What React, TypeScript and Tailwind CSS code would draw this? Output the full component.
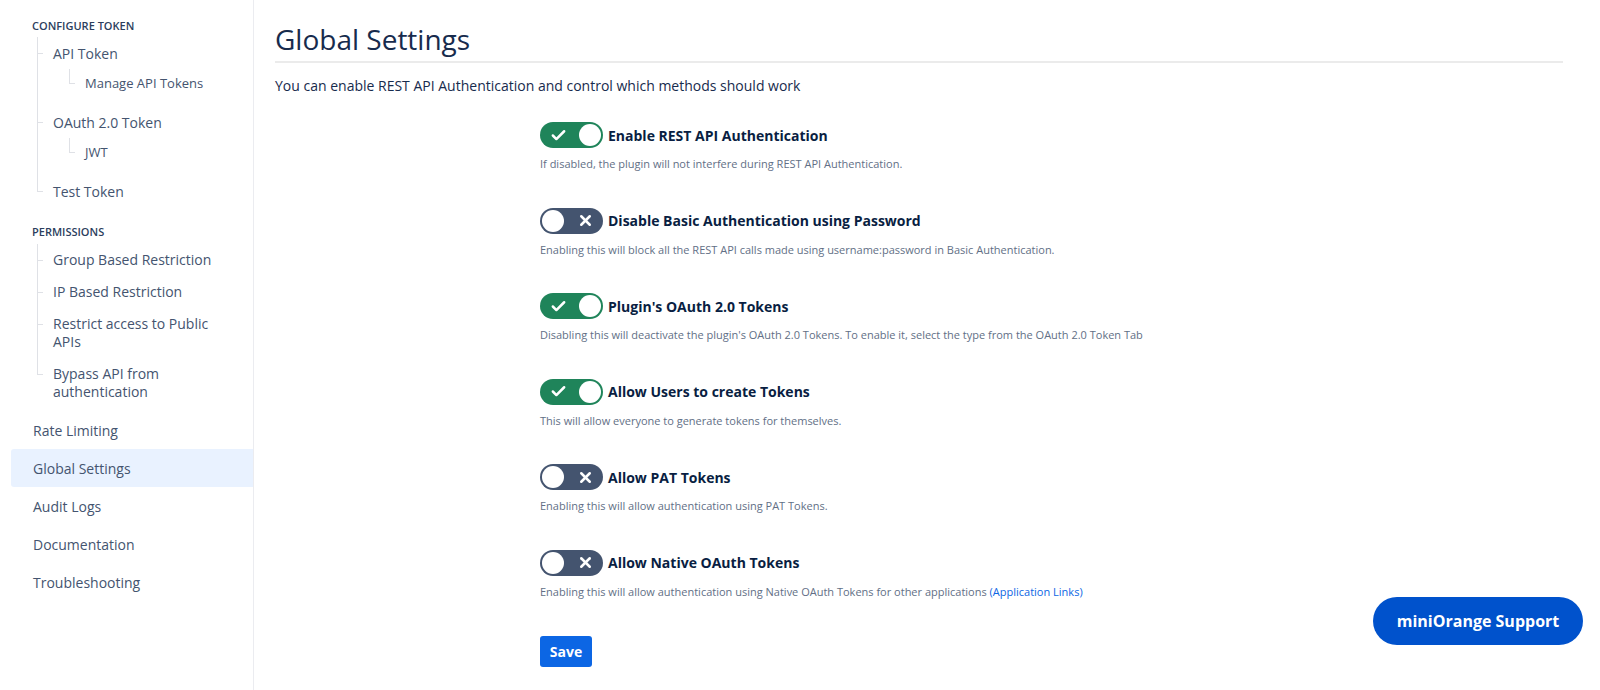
import { Check, X } from "lucide-react";

const font = { fontFamily: '"Open Sans", "Noto Sans", sans-serif' };

interface TreeItem {
  label: string;
  children?: string[];
}

const configureItems: TreeItem[] = [
  { label: "API Token", children: ["Manage API Tokens"] },
  { label: "OAuth 2.0 Token", children: ["JWT"] },
  { label: "Test Token" },
];

const permissionItems = [
  "Group Based Restriction",
  "IP Based Restriction",
  "Restrict access to Public APIs",
  "Bypass API from authentication",
];

const bottomItems = [
  "Rate Limiting",
  "Global Settings",
  "Audit Logs",
  "Documentation",
  "Troubleshooting",
];

interface Setting {
  title: string;
  description: string;
  enabled: boolean;
  link?: string;
}

const settings: Setting[] = [
  {
    title: "Enable REST API Authentication",
    description:
      "If disabled, the plugin will not interfere during REST API Authentication.",
    enabled: true,
  },
  {
    title: "Disable Basic Authentication using Password",
    description:
      "Enabling this will block all the REST API calls made using username:password in Basic Authentication.",
    enabled: false,
  },
  {
    title: "Plugin's OAuth 2.0 Tokens",
    description:
      "Disabling this will deactivate the plugin's OAuth 2.0 Tokens. To enable it, select the type from the OAuth 2.0 Token Tab",
    enabled: true,
  },
  {
    title: "Allow Users to create Tokens",
    description: "This will allow everyone to generate tokens for themselves.",
    enabled: true,
  },
  {
    title: "Allow PAT Tokens",
    description: "Enabling this will allow authentication using PAT Tokens.",
    enabled: false,
  },
  {
    title: "Allow Native OAuth Tokens",
    description:
      "Enabling this will allow authentication using Native OAuth Tokens for other applications",
    enabled: false,
    link: "(Application Links)",
  },
];

function Heading({ children }: { children: string }) {
  return (
    <div className="h-[16px] pl-[21px] text-[11px] font-semibold leading-[16px] text-[#2c3e5d]">
      {children}
    </div>
  );
}

function ConfigureTree() {
  return (
    <div className="relative mt-[3px] pl-[42px]">
      <span className="absolute top-0 bottom-[16px] left-[26px] w-px bg-[#dfe1e6]" />
      {configureItems.map((item, i) => (
        <div key={item.label} className={i < configureItems.length - 1 && item.children ? "mb-[7px]" : ""}>
          <div className="relative flex h-[32px] items-center text-[14px] text-[#44546f]">
            <span className="absolute top-1/2 left-[-16px] h-px w-[6px] bg-[#dfe1e6]" />
            {item.label}
          </div>
          {item.children?.map((child) => (
            <div
              key={child}
              className="relative flex h-[30px] items-center pl-[32px] text-[13px] text-[#44546f]"
            >
              <span className="absolute top-[0px] left-[16px] h-[15px] w-[6px] border-b border-l border-[#dfe1e6]" />
              {child}
            </div>
          ))}
        </div>
      ))}
    </div>
  );
}

function PermissionTree() {
  return (
    <div className="relative mt-[4px] pl-[42px]">
      <span className="absolute top-0 bottom-[34px] left-[26px] w-px bg-[#dfe1e6]" />
      {permissionItems.map((label) => (
        <div
          key={label}
          className="relative py-[7px] pr-[30px] text-[14px] leading-[18px] text-[#44546f]"
        >
          <span className="absolute top-[16px] left-[-16px] h-px w-[6px] bg-[#dfe1e6]" />
          {label}
        </div>
      ))}
    </div>
  );
}

function Sidebar() {
  return (
    <nav className="w-[254px] shrink-0 border-r border-[#ebecf0] pt-[18px] pl-[11px]">
      <Heading>CONFIGURE TOKEN</Heading>
      <ConfigureTree />
      <div className="mt-[17px]">
        <Heading>PERMISSIONS</Heading>
      </div>
      <PermissionTree />
      <div className="mt-[3px]">
        {bottomItems.map((label) => (
          <div
            key={label}
            className={
              "flex h-[38px] items-center rounded-l-[3px] pl-[22px] text-[14px] text-[#44546f] " +
              (label === "Global Settings" ? "bg-[#e9f2ff]" : "")
            }
          >
            {label}
          </div>
        ))}
      </div>
    </nav>
  );
}

function Toggle({ on }: { on: boolean }) {
  return (
    <div
      className={
        "flex h-[26px] w-[63px] shrink-0 items-center rounded-full p-[2px] " +
        (on ? "justify-end bg-[#1f845a]" : "justify-start bg-[#44546f]")
      }
    >
      {on ? (
        <>
          <Check className="mr-auto ml-[8px] size-[17px] text-white" strokeWidth={3.5} />
          <span className="size-[22px] rounded-full bg-white" />
        </>
      ) : (
        <>
          <span className="size-[22px] rounded-full bg-white" />
          <X className="mr-[7px] ml-auto size-[17px] text-white" strokeWidth={3.5} />
        </>
      )}
    </div>
  );
}

function SettingRow({ setting }: { setting: Setting }) {
  return (
    <div className="h-[85.6px]">
      <div className="flex items-center gap-[5px]">
        <Toggle on={setting.enabled} />
        <span className="text-[14px] font-bold text-[#091e42]">{setting.title}</span>
      </div>
      <p className="mt-[8px] text-[11px] leading-[16px] text-[#626f86]">
        {setting.description}
        {setting.link && <span className="text-[#0c66e4]"> {setting.link}</span>}
      </p>
    </div>
  );
}

export default function App() {
  return (
    <div className="relative flex h-[690px] overflow-hidden bg-white" style={font}>
      <Sidebar />
      <main className="flex-1 pt-[21px] pr-[37px] pl-[21px]">
        <h1 className="border-b-2 border-[#ebebeb] pb-[4px] text-[28px] leading-[36px] font-medium text-[#172b4d]">
          Global Settings
        </h1>
        <p className="mt-[13px] text-[14px] leading-[20px] text-[#172b4d]">
          You can enable REST API Authentication and control which methods should work
        </p>
        <div className="mt-[26px] pl-[265px]">
          {settings.map((s) => (
            <SettingRow key={s.title} setting={s} />
          ))}
          <button className="h-[31px] w-[52px] rounded-[3px] bg-[#0c66e4] text-[14px] font-bold text-white">
            Save
          </button>
        </div>
      </main>
      <button className="absolute right-[17px] bottom-[45px] h-[48px] w-[210px] rounded-full bg-[#0052cc] text-[16px] font-bold text-white">
        miniOrange Support
      </button>
    </div>
  );
}
